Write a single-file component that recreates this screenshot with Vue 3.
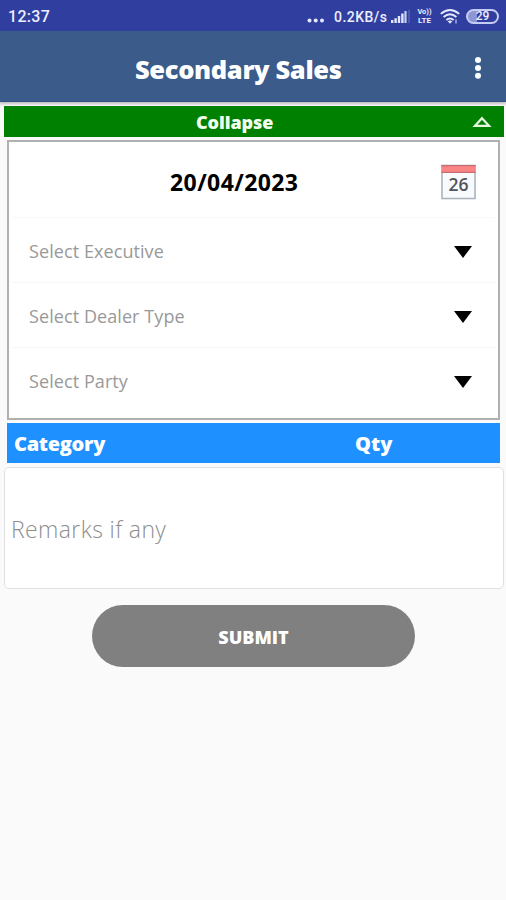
<script setup>
import { ref } from 'vue'

const selects = ref([
  { key: 'executive', label: 'Select Executive' },
  { key: 'dealer', label: 'Select Dealer Type' },
  { key: 'party', label: 'Select Party' },
])
</script>

<template>
  <div class="screen">
    <div class="status">
      <span class="clock">12:37</span>
      <div class="indicators">
        <svg class="dots" width="18" height="5" viewBox="0 0 18 5"><circle cx="2.500" cy="2.500" r="2" /><circle cx="8.700" cy="2.500" r="2" /><circle cx="15" cy="2.500" r="2" /></svg>
        <span class="speed">0.2KB/s</span>
        <svg class="signal" width="19" height="15" viewBox="0 0 19 15">
          <path d="M0 14v-3h2.400v3zM3.400 14V9.300h2.400V14zM6.800 14V7h2.400v7zM10.200 14V4.500h2.400V14z" />
          <path d="M13.400 14V2h2.200v12z" opacity=".85" /><path d="M17.500 1h1v13h-1z" opacity=".3" />
        </svg>
        <span class="volte"><span>Vo))</span><span>LTE</span></span>
        <svg class="wifi" width="20" height="17" viewBox="0 0 20 17">
          <g fill="none" stroke="#e4e8ff" stroke-width="1.900"><path d="M.8 5.900Q10-2 19.200 5.900" /><path d="M3.600 9Q10 3.300 16.400 9" /><path d="M6.400 12Q10 8.800 13.600 12" /></g>
          <path d="M7.700 13.300Q10 11.500 12.300 13.300L10 15.800zM16.500 11.500v4h-1v-4z" />
        </svg>
        <span class="battery">29</span>
      </div>
    </div>

    <header class="appbar">
      <h1>Secondary Sales</h1>
      <svg class="more" width="8" height="24" viewBox="0 0 8 24"><circle cx="4" cy="4" r="3" /><circle cx="4" cy="12" r="3" /><circle cx="4" cy="19.800" r="3" /></svg>
    </header>

    <div class="collapse">
      <span>Collapse</span>
      <svg class="up" width="20" height="12" viewBox="0 0 20 12"><path d="M10 2.200L17 9.800H3z" fill="none" stroke="#e4f8df" stroke-width="2.300" /></svg>
    </div>

    <section class="panel">
      <div class="date-row">
        <span class="date">20/04/2023</span>
        <svg class="calendar" width="35" height="36" viewBox="0 0 36 36">
          <rect x="1" y="1" width="34" height="34" fill="#f8fafc" stroke="#a9b2bd" stroke-width="1.600" />
          <path d="M.5.5h35v8H.5z" fill="#fa8585" /><path d="M.5.5h35v1.300H.5zM.5 7.500h35v1.200H.5z" fill="#c96b70" />
          <text x="18" y="27" text-anchor="middle">26</text>
        </svg>
      </div>
      <div v-for="item in selects" :key="item.key" class="select-row">
        <span>{{ item.label }}</span>
        <svg width="18" height="12" viewBox="0 0 18 12"><path d="M0 0h18L9 12z" /></svg>
      </div>
    </section>

    <div class="table-head"><span class="category">Category</span><span class="qty">Qty</span></div>
    <div class="remarks"><span>Remarks if any</span></div>
    <button class="submit"><span>SUBMIT</span></button>
  </div>
</template>

<style>
body { background: #fafafa; }
</style>

<style scoped>
.screen {
  width: 506px;
  height: 900px;
  display: flex;
  flex-direction: column;
  overflow: hidden;
  background: #fafafa;
  font-family: "Open Sans", "Noto Sans", sans-serif;
}
.status {
  height: 31px;
  flex: none;
  box-sizing: border-box;
  padding: 2px 7px 0 8px;
  display: flex;
  justify-content: space-between;
  align-items: center;
  background: #303f9f;
  color: #eceeff;
  font-family: Roboto, sans-serif;
}
.clock { font-size: 16px; font-weight: 500; letter-spacing: .3px; }
.indicators { display: flex; align-items: center; }
.indicators svg { fill: #e4e8ff; }
.dots { margin: 7px 9px 0 0; }
.speed { width: 54px; font-size: 14px; font-weight: 500; white-space: nowrap; letter-spacing: .45px; }
.signal { margin-left: 3px; }
.volte {
  width: 17px;
  margin-left: 6px;
  display: flex;
  flex-direction: column;
  align-items: center;
  font-size: 8px;
  font-weight: 700;
  line-height: 10px;
}
.volte span:first-child { font-size: 7.5px; line-height: 9px; }
.wifi { margin: 0 6px 0 7px; }
.battery {
  width: 33px;
  height: 15px;
  box-sizing: border-box;
  border: 2px solid #c5ccf5;
  border-radius: 8px;
  background: linear-gradient(90deg, #8c97d4 30%, #303f9f 30%);
  font-size: 12px;
  font-weight: 500;
  line-height: 11px;
  text-align: center;
}
.appbar {
  height: 71px;
  flex: none;
  box-sizing: border-box;
  padding: 0 24px 0 135px;
  border-bottom: 1px solid #345285;
  display: flex;
  align-items: center;
  justify-content: space-between;
  background: #3b5b8b;
  box-shadow: 0 1px 3px 1px #bdbdbd;
  clip-path: inset(0 0 -6px 0);
}
h1 {
  margin: 5px 0 0;
  color: #fff;
  font-size: 25.5px;
  font-weight: 800;
  line-height: 34px;
  letter-spacing: -.35px;
  white-space: nowrap;
}
.more { fill: #fff; margin-top: 3px; }
.collapse {
  height: 31px;
  flex: none;
  margin: 4px 2px 0 4px;
  padding: 0 12px 0 192px;
  display: flex;
  align-items: center;
  justify-content: space-between;
  background: #008000;
  color: #f2fff0;
  font-size: 18px;
  font-weight: 800;
  line-height: 24px;
  letter-spacing: -.1px;
}
.panel {
  height: 280px;
  flex: none;
  box-sizing: border-box;
  margin: 3px 6px 0 7px;
  padding: 0 3px;
  border: 2px solid #b0b0b0;
  background: #fff;
}
.date-row {
  height: 76px;
  box-sizing: border-box;
  padding: 4px 19px 0 158px;
  display: flex;
  align-items: center;
  justify-content: space-between;
  border-bottom: 1px solid #f9f9f9;
}
.date { color: #000; font-size: 23px; font-weight: 700; letter-spacing: .42px; }
.calendar text { font-size: 18px; font-weight: 600; fill: #50555b; }
.select-row {
  height: 65px;
  box-sizing: border-box;
  padding: 3px 23px 0 17px;
  display: flex;
  align-items: center;
  justify-content: space-between;
  border-bottom: 1px solid #f7f7f7;
  color: #999;
  font-size: 18px;
  font-weight: 400;
  letter-spacing: .08px;
}
.select-row span { margin-top: -2px; }
.select-row:last-child { border-bottom: 0; }
.table-head {
  height: 40px;
  flex: none;
  margin: 3px 6px 0 7px;
  display: flex;
  align-items: center;
  background: #1e90ff;
  color: #fff;
  font-size: 20px;
  font-weight: 800;
}
.category { width: 341px; padding-left: 7px; letter-spacing: -.3px; }
.remarks {
  height: 122px;
  flex: none;
  box-sizing: border-box;
  margin: 4px 2px 0 4px;
  padding: 2px 6px 0;
  border: 1.5px solid #e0e0e2;
  border-radius: 5px;
  display: flex;
  align-items: center;
  background: #fff;
  color: #8e8e8e;
  font-size: 23px;
  font-weight: 300;
  letter-spacing: .38px;
}
.submit {
  width: 323px;
  height: 62px;
  flex: none;
  margin: 16px 0 0 92px;
  padding: 2px 0 0;
  border: 0;
  border-radius: 31px;
  background: #808080;
  color: #fff;
  font-family: inherit;
  font-size: 18px;
  font-weight: 800;
}
</style>
